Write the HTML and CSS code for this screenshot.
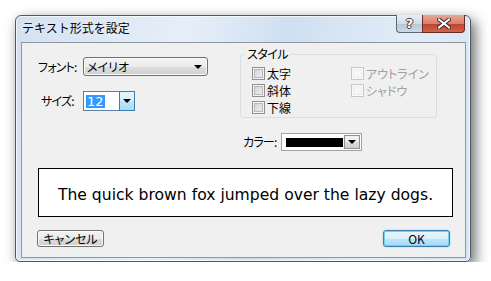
FILE: index.html
```html
<!DOCTYPE html>
<html lang="ja">
<head>
    <meta charset="UTF-8">
    <title>テキスト形式を設定</title>
    <link rel="stylesheet" href="styles.css">
</head>
<body>
    <div class="window">
        <div class="titlebar">
            <span class="title">テキスト形式を設定</span>
            <div class="caption-btns">
                <span class="cap-btn help">?</span>
                <span class="cap-btn close">
                    <svg width="14" height="11" viewBox="0 0 14 11">
                        <path d="M2 1.5 L12 9.5 M12 1.5 L2 9.5" stroke="#3b2020" stroke-width="4" stroke-linecap="square"/>
                        <path d="M2 1.5 L12 9.5 M12 1.5 L2 9.5" stroke="#fff" stroke-width="2" stroke-linecap="square"/>
                    </svg>
                </span>
            </div>
        </div>
        <div class="client">
            <div class="top">
                <div class="left">
                    <div class="row font-row">
                        <span class="label">フォント:</span>
                        <div class="select">
                            <span>メイリオ</span>
                            <span class="arrow"></span>
                        </div>
                    </div>
                    <div class="row size-row">
                        <span class="label">サイズ:</span>
                        <div class="combo size">
                            <div class="combo-field"><span class="selected">12</span></div>
                            <div class="combo-btn focus"><span class="arrow"></span></div>
                        </div>
                    </div>
                </div>
                <div class="right">
                    <fieldset class="group">
                        <legend>スタイル</legend>
                        <div class="checks">
                            <label class="check"><span class="box"></span>太字</label>
                            <label class="check disabled"><span class="box"></span>アウトライン</label>
                            <label class="check"><span class="box"></span>斜体</label>
                            <label class="check disabled"><span class="box"></span>シャドウ</label>
                            <label class="check"><span class="box"></span>下線</label>
                        </div>
                    </fieldset>
                    <div class="row color-row">
                        <span class="label">カラー:</span>
                        <div class="combo color">
                            <div class="combo-field"><span class="swatch"></span></div>
                            <div class="combo-btn"><span class="arrow"></span></div>
                        </div>
                    </div>
                </div>
            </div>
            <div class="preview">The quick brown fox jumped over the lazy dogs.</div>
            <div class="buttons">
                <span class="btn">キャンセル</span>
                <span class="btn default">OK</span>
            </div>
        </div>
    </div>
</body>
</html>
```

FILE: styles.css
```css
body {
    margin: 0;
    background: #fff;
    font-family: "Noto Sans CJK JP", "Noto Sans", sans-serif;
    font-size: 12px;
    color: #000;
}
.window {
    box-sizing: border-box;
    width: 456px;
    height: 247px;
    margin: 15px 0 0 15px;
    padding: 0 4px 3px 5px;
    border: 1px solid #4f5964;
    border-radius: 6px 6px 5px 5px;
    background: linear-gradient(100deg, #d2e1f2 0%, #e6eff9 35%, #cfdff1 55%, #e2ecf8 80%, #d6e4f4 100%);
    box-shadow: 4px 5px 14px rgba(0,0,0,0.6), inset 0 0 0 1px rgba(255,255,255,0.7);
    display: flex;
    flex-direction: column;
}
.titlebar {
    height: 26px;
    display: flex;
    justify-content: space-between;
    align-items: flex-start;
}
.title {
    margin: 4px 0 0 1px;
    line-height: 16px;
    color: #000;
    text-shadow: 0 0 6px rgba(255,255,255,0.9);
}
.caption-btns {
    display: flex;
    margin: -1px 1px 0 0;
}
.cap-btn {
    box-sizing: border-box;
    height: 18px;
    display: flex;
    align-items: center;
    justify-content: center;
    border: 1px solid #5b6774;
    border-top: none;
}
.help {
    width: 26px;
    border-right: none;
    border-radius: 0 0 0 4px;
    background: linear-gradient(#e7edf4 0%, #d3dde8 50%, #b7c5d4 51%, #cdd9e5 100%);
    color: #fff;
    font-family: "DejaVu Sans", sans-serif;
    font-weight: bold;
    font-size: 13px;
    text-shadow: 1px 0 #3d3d3d, -1px 0 #3d3d3d, 0 1px #3d3d3d, 0 -1px #3d3d3d;
}
.close {
    width: 43px;
    border-color: #6b2a22;
    border-radius: 0 0 4px 0;
    background: linear-gradient(#e7a796 0%, #d7806c 50%, #c0412c 51%, #d0634c 100%);
}
.client {
    flex: 1;
    background: #f0f0f0;
    border: 1px solid #8e969f;
    padding: 4px 15px 9px 15px;
    display: flex;
    flex-direction: column;
}
.top {
    display: flex;
}
.left {
    width: 203px;
}
.row {
    display: flex;
    align-items: center;
}
.label {
    font-feature-settings: "palt";
    letter-spacing: -0.8px;
    line-height: 14px;
}
.font-row {
    margin-top: 10px;
}
.font-row .label {
    width: 45px;
    margin-left: 1px;
}
.size-row {
    margin-top: 15px;
}
.size-row .label {
    width: 42px;
    margin-left: 4px;
}
.select {
    box-sizing: border-box;
    width: 125px;
    height: 19px;
    border: 1px solid #707070;
    border-radius: 3px;
    background: linear-gradient(#f3f3f3 0%, #ebebeb 50%, #dddddd 51%, #d0d0d0 100%);
    box-shadow: inset 0 0 0 1px #fbfbfb;
    display: flex;
    align-items: center;
    justify-content: space-between;
    padding: 0 5px 0 3px;
    font-feature-settings: "palt";
}
.arrow {
    width: 0;
    height: 0;
    border-left: 4px solid transparent;
    border-right: 4px solid transparent;
    border-top: 4px solid #000;
}
.combo {
    display: flex;
    box-sizing: border-box;
    background: #fff;
}
.combo-field {
    flex: 1;
    display: flex;
    align-items: center;
}
.combo-btn {
    box-sizing: border-box;
    width: 16px;
    display: flex;
    align-items: center;
    justify-content: center;
    border: 1px solid #8f8f8f;
    background: linear-gradient(#f2f2f2 0%, #ebebeb 50%, #dddddd 51%, #cfcfcf 100%);
}
.combo-btn.focus {
    border-color: #3c7fb1;
    background: linear-gradient(#e5f4fc 0%, #d6eefb 50%, #bde4f8 51%, #a9dbf6 100%);
}
.size {
    width: 52px;
    height: 20px;
    border: 1px solid #5a7fa8;
    border-right: none;
}
.size .combo-btn {
    margin: -1px 0;
    height: 20px;
}
.selected {
    margin-left: 2px;
    padding: 0 1px;
    line-height: 13px;
    background: #3399ff;
    color: #fff;
    font-family: "DejaVu Sans", sans-serif;
    font-size: 13px;
}
.right {
    width: 197px;
}
.group {
    margin: 0;
    padding: 0 0 1px 11px;
    border: 1px solid #d5dfe5;
    border-radius: 3px;
}
.group legend {
    padding: 0 2px;
    margin-left: -7px;
    line-height: 14px;
    letter-spacing: -0.5px;
    font-feature-settings: "palt";
}
.checks {
    display: grid;
    grid-template-columns: 99px auto;
    grid-auto-rows: 17px;
    margin-top: 4px;
}
.check {
    display: flex;
    align-items: flex-start;
    line-height: 17px;
    font-feature-settings: "palt";
}
.box {
    box-sizing: border-box;
    width: 13px;
    height: 13px;
    margin: 2px 2px 0 0;
    border: 1px solid #8f8f8f;
    background: linear-gradient(135deg, #d0d0d0, #f4f4f4);
    box-shadow: inset 0 0 0 1px #f4f4f4, inset 0 0 0 2px #b8b8b8;
}
.check.disabled {
    color: #a0a0a0;
}
.check.disabled .box {
    border-color: #c8c8c8;
    box-shadow: inset 0 0 0 1px #fafafa, inset 0 0 0 2px #ececec;
    background: #f7f7f7;
}
.color-row {
    margin-top: 15px;
}
.color-row .label {
    width: 38px;
    margin-left: 3px;
}
.color {
    width: 81px;
    height: 18px;
    border: 1px solid #a3a3a3;
    padding: 1px;
}
.color .swatch {
    display: block;
    width: 57px;
    height: 9px;
    margin-left: 3px;
    background: #000;
}
.color .combo-btn {
    width: 16px;
    height: 14px;
    margin-left: 1px;
}
.preview {
    box-sizing: border-box;
    width: 415px;
    height: 49px;
    margin: 17px 0 0 1px;
    border: 1px solid #000;
    background: #fff;
    display: flex;
    align-items: center;
    justify-content: center;
    font-family: "DejaVu Sans", sans-serif;
    font-size: 15.6px;
    padding-top: 4px;
}
.buttons {
    display: flex;
    justify-content: space-between;
    margin-top: 13px;
}
.btn {
    box-sizing: border-box;
    width: 67px;
    height: 17px;
    border: 1px solid #707070;
    border-radius: 3px;
    background: linear-gradient(#f2f2f2 0%, #ebebeb 50%, #dddddd 51%, #cfcfcf 100%);
    box-shadow: inset 0 0 0 1px #fcfcfc;
    display: flex;
    align-items: center;
    justify-content: center;
    line-height: 14px;
    font-feature-settings: "palt";
}
.btn.default {
    border-color: #3c7fb1;
    background: linear-gradient(#eaf6fd 0%, #d9f0fc 50%, #bee6fd 51%, #a7d9f5 100%);
    box-shadow: inset 0 0 0 1px #6fd0f5, 0 0 2px #8ad6f5;
}
```
